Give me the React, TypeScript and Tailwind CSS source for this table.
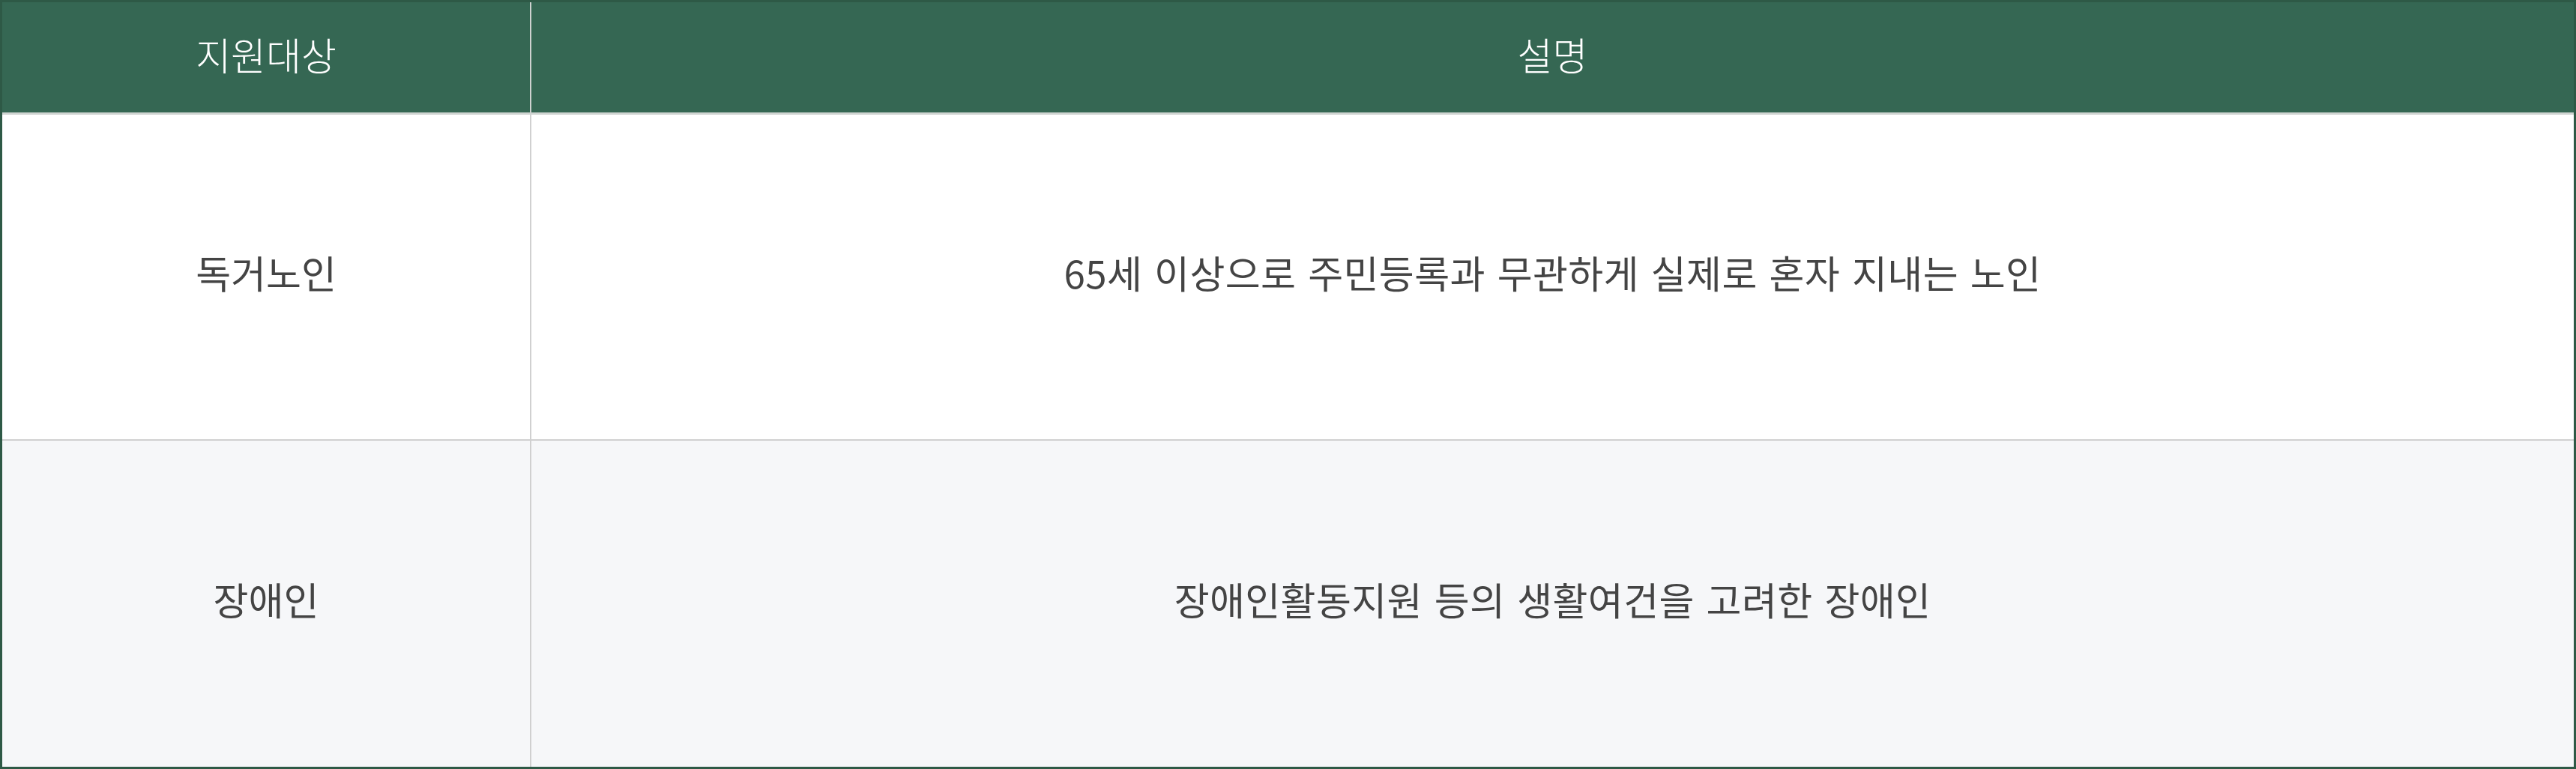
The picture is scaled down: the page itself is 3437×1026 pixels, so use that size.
const rows = [
  {
    target: "독거노인",
    desc: "65세 이상으로 주민등록과 무관하게 실제로 혼자 지내는 노인",
    bg: "bg-white",
  },
  {
    target: "장애인",
    desc: "장애인활동지원 등의 생활여건을 고려한 장애인",
    bg: "bg-[#f6f7f9]",
  },
];

export default function App() {
  return (
    <div className="w-[3437px] h-[1026px] border-[3px] border-[#2e5946] bg-white font-['Noto_Sans_CJK_KR','Noto_Sans',sans-serif]">
      <div className="grid h-full grid-cols-[706px_1fr] grid-rows-[150px_1fr_1fr]">
        {/* Header */}
        <div className="flex items-center justify-center pb-2 bg-[#356753] border-r-2 border-[#cfd2d0] border-b-[3px] border-b-[#cfd4d1] text-[51px] font-light text-white">
          지원대상
        </div>
        <div className="flex items-center justify-center pb-2 bg-[#356753] border-b-[3px] border-b-[#cfd4d1] text-[51px] font-light text-white">
          설명
        </div>

        {/* Rows */}
        {rows.map((r, i) => (
          <div key={r.target} className="contents">
            <div
              className={`flex items-center justify-center pb-3 border-r-2 border-[#d0d0d0] text-[51px] font-normal text-[#444] ${r.bg} ${
                i === 0 ? "border-b-2 border-b-[#d0d0d0]" : ""
              }`}
            >
              {r.target}
            </div>
            <div
              className={`flex items-center justify-center pb-3 text-[51px] font-normal text-[#444] tracking-[0.4px] [word-spacing:4px] ${r.bg} ${
                i === 0 ? "border-b-2 border-b-[#d0d0d0]" : ""
              }`}
            >
              {r.desc}
            </div>
          </div>
        ))}
      </div>
    </div>
  );
}
